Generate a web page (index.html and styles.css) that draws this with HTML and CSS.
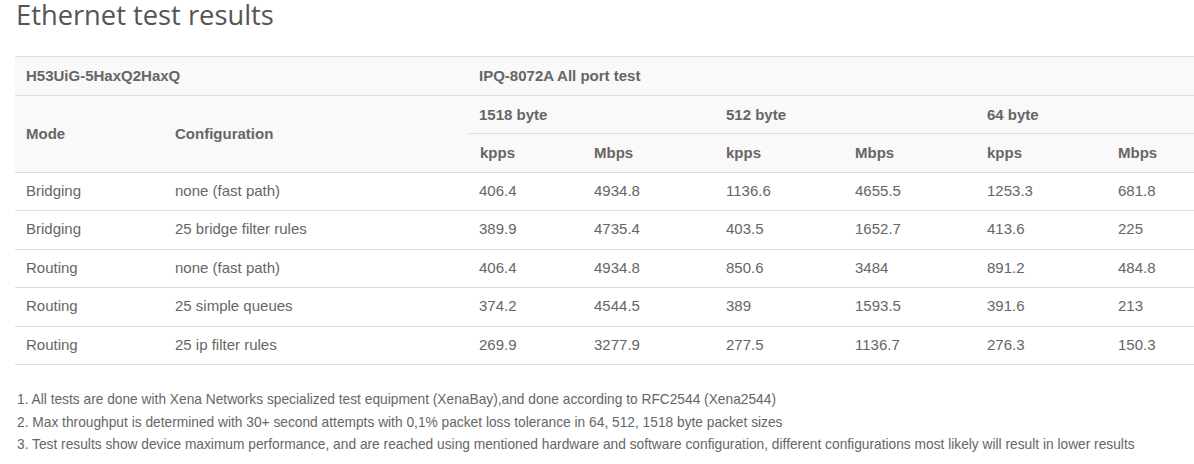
FILE: index.html
```html
<!DOCTYPE html>
<html lang="en">
<head>
<meta charset="utf-8">
<title>Ethernet test results</title>
<link rel="stylesheet" href="styles.css">
</head>
<body>
<div class="page">
  <h2 class="title">Ethernet test results</h2>
  <table class="results">
    <colgroup>
      <col class="c-mode"><col class="c-conf"><col class="c-a"><col class="c-b"><col class="c-c"><col class="c-d"><col class="c-e"><col>
    </colgroup>
    <thead>
      <tr>
        <th colspan="2">H53UiG-5HaxQ2HaxQ</th>
        <th colspan="6">IPQ-8072A All port test</th>
      </tr>
      <tr>
        <th rowspan="2" class="mid">Mode</th>
        <th rowspan="2" class="mid">Configuration</th>
        <th colspan="2">1518 byte</th>
        <th colspan="2">512 byte</th>
        <th colspan="2">64 byte</th>
      </tr>
      <tr>
        <th>kpps</th><th>Mbps</th><th>kpps</th><th>Mbps</th><th>kpps</th><th>Mbps</th>
      </tr>
    </thead>
    <tbody>
      <tr><td>Bridging</td><td>none (fast path)</td><td>406.4</td><td>4934.8</td><td>1136.6</td><td>4655.5</td><td>1253.3</td><td>681.8</td></tr>
      <tr><td>Bridging</td><td>25 bridge filter rules</td><td>389.9</td><td>4735.4</td><td>403.5</td><td>1652.7</td><td>413.6</td><td>225</td></tr>
      <tr><td>Routing</td><td>none (fast path)</td><td>406.4</td><td>4934.8</td><td>850.6</td><td>3484</td><td>891.2</td><td>484.8</td></tr>
      <tr><td>Routing</td><td>25 simple queues</td><td>374.2</td><td>4544.5</td><td>389</td><td>1593.5</td><td>391.6</td><td>213</td></tr>
      <tr><td>Routing</td><td>25 ip filter rules</td><td>269.9</td><td>3277.9</td><td>277.5</td><td>1136.7</td><td>276.3</td><td>150.3</td></tr>
    </tbody>
  </table>
  <div class="notes">
    <p>1. All tests are done with Xena Networks specialized test equipment (XenaBay),and done according to RFC2544 (Xena2544)</p>
    <p>2. Max throughput is determined with 30+ second attempts with 0,1% packet loss tolerance in 64, 512, 1518 byte packet sizes</p>
    <p>3. Test results show device maximum performance, and are reached using mentioned hardware and software configuration, different configurations most likely will result in lower results</p>
  </div>
</div>
</body>
</html>
```
FILE: styles.css
```css
html, body {
  margin: 0;
  padding: 0;
  background: #fff;
}
.page {
  padding: 0 0 0 15px;
  font-family: "Liberation Sans", Arial, sans-serif;
  color: #666;
}
.title {
  font-family: "Open Sans", sans-serif;
  font-weight: 400;
  font-size: 27.3px;
  line-height: 30px;
  color: #555;
  margin: 0 0 26px 1px;
}
.results {
  width: 1190px;
  border-collapse: collapse;
  table-layout: fixed;
  font-size: 15px;
  line-height: 21.5px;
}
.c-mode { width: 150px; }
.c-conf { width: 304px; }
.c-a { width: 115px; }
.c-b { width: 132px; }
.c-c { width: 129px; }
.c-d { width: 132px; }
.c-e { width: 131px; }
.results th,
.results td {
  padding: 8px 10px;
  text-align: left;
  border-top: 1px solid #ddd;
  vertical-align: top;
}
.results td:first-child,
.results th:first-child {
  padding-left: 11px;
}
.results thead {
  background: #f9f9f9;
}
.results th {
  font-weight: 700;
  color: #666;
}
.results th.mid {
  vertical-align: middle;
}
.results tbody td {
  padding-top: 7px;
  padding-bottom: 9px;
}
.results tbody tr:last-child td {
  border-bottom: 1px solid #ddd;
}
.notes {
  margin-top: 24px;
  font-size: 13.75px;
  line-height: 22.5px;
  color: #666;
}
.notes p {
  margin: 0 0 0 2px;
}
```
